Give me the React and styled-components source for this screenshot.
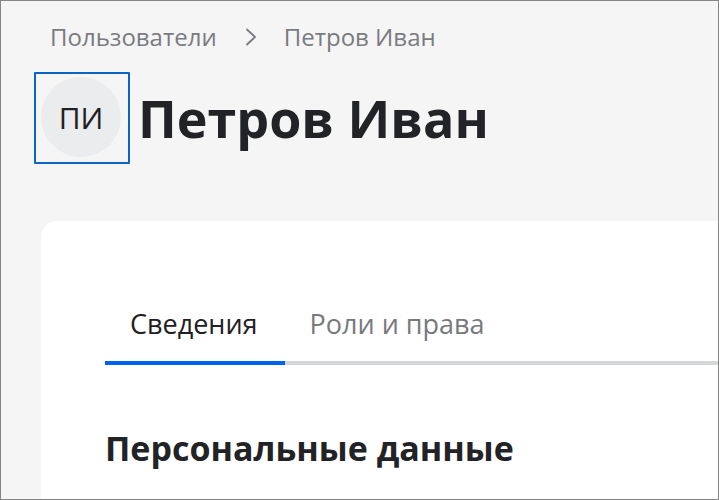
import React from "react";
import styled, { createGlobalStyle } from "styled-components";

const Global = createGlobalStyle`
  html, body { margin: 0; padding: 0; }
  body { font-family: "Open Sans", "Noto Sans", sans-serif; background: #f5f5f5; }
  * { box-sizing: border-box; }
`;

const Frame = styled.div`
  width: 719px;
  height: 500px;
  border: 1px solid #858585;
  background: #f5f5f5;
  overflow: hidden;
  padding: 0 0 0 40px;
  display: flex;
  flex-direction: column;
`;

const Breadcrumbs = styled.nav`
  display: flex;
  align-items: center;
  gap: 27px;
  padding: 19px 0 0 9px;
  height: 52px;
  font-size: 24px;
  color: #797b80;
`;

const Crumb = styled.span`
  line-height: 32px;
  white-space: nowrap;
`;

const Chevron = styled.svg`
  width: 12px;
  height: 18px;
  flex: none;
  margin-left: 1px;
  color: #797b80;
`;

const Header = styled.div`
  display: flex;
  align-items: center;
  gap: 8px;
  margin-top: 19px;
`;

const AvatarFocus = styled.div`
  margin-left: -7px;
  padding: 3px 7px 5px 5px;
  border: 2px solid #0b63c4;
  border-radius: 1px;
  display: flex;
`;

const Avatar = styled.div`
  width: 80px;
  height: 80px;
  border-radius: 50%;
  background: #ebecee;
  display: flex;
  align-items: center;
  justify-content: center;
  font-size: 30px;
  color: #1f2023;
`;

const Title = styled.h1`
  margin: 0;
  font-size: 52px;
  font-weight: 700;
  color: #222326;
  line-height: 1.2;
  white-space: nowrap;
`;

const Card = styled.section`
  margin-top: 57px;
  flex: 1;
  background: #fff;
  border-radius: 16px 0 0 0;
  padding: 85px 0 0 64px;
`;

const Tabs = styled.div`
  display: flex;
  border-bottom: 4px solid #d5d6d9;
`;

const Tab = styled.div`
  padding: 0 27px 19px 25px;
  font-size: 27px;
  line-height: 36px;
  white-space: nowrap;
  color: ${(p) => (p.$active ? "#1f2023" : "#77797e")};
  margin-bottom: -4px;
  border-bottom: 4px solid ${(p) => (p.$active ? "#0062ec" : "transparent")};
`;

const SectionTitle = styled.h2`
  margin: 63px 0 0 0;
  font-size: 34px;
  font-weight: 700;
  color: #222326;
  line-height: 1.2;
  white-space: nowrap;
`;

export default function App() {
  return (
    <>
      <Global />
      <Frame>
        <Breadcrumbs>
          <Crumb>Пользователи</Crumb>
          <Chevron viewBox="0 0 12 18" fill="none" stroke="currentColor" strokeWidth="1.8" strokeLinecap="round" strokeLinejoin="round">
            <path d="M2 1.5 L10 9 L2 16.5" />
          </Chevron>
          <Crumb>Петров Иван</Crumb>
        </Breadcrumbs>
        <Header>
          <AvatarFocus>
            <Avatar>ПИ</Avatar>
          </AvatarFocus>
          <Title>Петров Иван</Title>
        </Header>
        <Card>
          <Tabs>
            <Tab $active>Сведения</Tab>
            <Tab>Роли и права</Tab>
          </Tabs>
          <SectionTitle>Персональные данные</SectionTitle>
        </Card>
      </Frame>
    </>
  );
}
